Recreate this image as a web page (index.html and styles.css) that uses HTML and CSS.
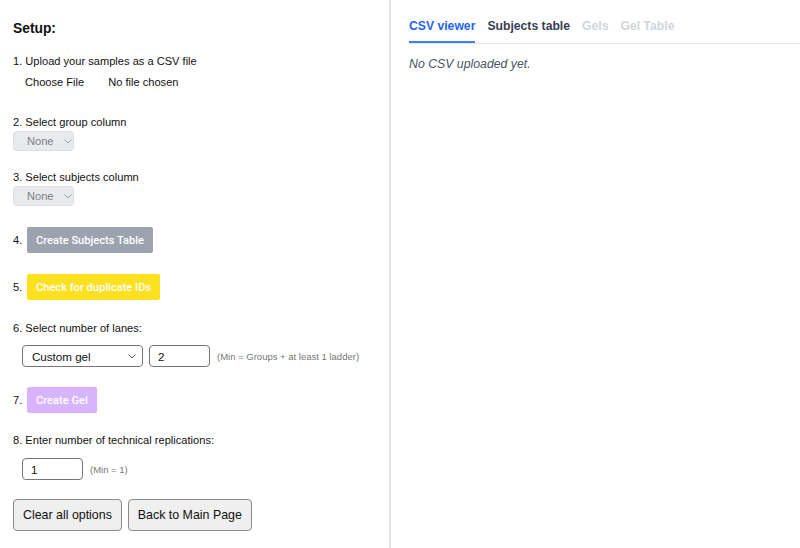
FILE: index.html
```html
<!DOCTYPE html>
<html>
<head>
<meta charset="utf-8">
<link rel="stylesheet" href="styles.css">
</head>
<body>
<div class="page">
  <div class="left">
    <h2 class="title">Setup:</h2>
    <div class="label s1">1. Upload your samples as a CSV file</div>
    <div class="file-row"><span class="file-btn">Choose File</span><span class="file-name">No file chosen</span></div>

    <div class="label s2">2. Select group column</div>
    <div class="sel-dis">None <svg class="chev" viewBox="0 0 8 5" width="8" height="5"><path d="M0.5 0.5 L4 4 L7.5 0.5" fill="none" stroke="#9ca3af" stroke-width="1"/></svg></div>

    <div class="label s3">3. Select subjects column</div>
    <div class="sel-dis">None <svg class="chev" viewBox="0 0 8 5" width="8" height="5"><path d="M0.5 0.5 L4 4 L7.5 0.5" fill="none" stroke="#9ca3af" stroke-width="1"/></svg></div>

    <div class="btn-row s4"><span class="num">4.</span><span class="btn gray">Create Subjects Table</span></div>
    <div class="btn-row s5"><span class="num">5.</span><span class="btn yellow">Check for duplicate IDs</span></div>

    <div class="label s6">6. Select number of lanes:</div>
    <div class="input-row r6">
      <div class="select">Custom gel <svg class="chev2" viewBox="0 0 8 5" width="8" height="5"><path d="M0.5 0.5 L4 4 L7.5 0.5" fill="none" stroke="#555" stroke-width="1"/></svg></div>
      <div class="input">2</div>
      <span class="hint">(Min = Groups + at least 1 ladder)</span>
    </div>

    <div class="btn-row s7"><span class="num">7.</span><span class="btn purple">Create Gel</span></div>

    <div class="label s8">8. Enter number of technical replications:</div>
    <div class="input-row r8">
      <div class="input">1</div>
      <span class="hint">(Min = 1)</span>
    </div>

    <div class="actions">
      <span class="action">Clear all options</span>
      <span class="action">Back to Main Page</span>
    </div>
  </div>
  <div class="right">
    <div class="tabs">
      <span class="tab active">CSV viewer</span>
      <span class="tab">Subjects table</span>
      <span class="tab disabled">Gels</span>
      <span class="tab disabled">Gel Table</span>
    </div>
    <div class="empty">No CSV uploaded yet.</div>
  </div>
</div>
</body>
</html>
```

FILE: styles.css
```css
* { box-sizing: border-box; }
html, body { margin: 0; padding: 0; background: #fff; }
body {
  font-family: "Liberation Sans", Arial, sans-serif;
  color: #111;
  width: 800px;
  height: 548px;
  overflow: hidden;
}
.page { display: flex; height: 548px; }
.left {
  width: 389px;
  padding: 18px 0 0 13px;
  display: flex;
  flex-direction: column;
  align-items: flex-start;
}
.right {
  flex: 1;
  border-left: 2px solid #e3e5e9;
  padding: 0 0 0 18px;
}
.title {
  margin: 0;
  font-size: 13.8px;
  font-weight: bold;
  line-height: 21px;
}
.label { font-size: 11.1px; line-height: 16px; }
.s1 { margin-top: 14px; }
.file-row {
  margin-top: 3px;
  height: 20px;
  display: flex;
  align-items: center;
  font-size: 11.1px;
  padding-left: 12px;
}
.file-btn { margin-right: 24px; }
.s2 { margin-top: 22px; }
.s3 { margin-top: 18px; }
.sel-dis {
  margin-top: 1px;
  width: 61px;
  height: 20px;
  background: #e9eaee;
  border: 1px solid #dcdee3;
  border-radius: 4px;
  color: #7b7f87;
  font-size: 11.1px;
  display: flex;
  align-items: center;
  padding-left: 13px;
}
.chev { margin-left: 10px; }
.btn-row { display: flex; align-items: center; font-size: 11.1px; }
.num { width: 14px; }
.btn {
  height: 26px;
  display: inline-flex;
  align-items: center;
  padding: 0 9px;
  color: #fff;
  font-family: Roboto, "Liberation Sans", sans-serif;
  font-size: 11.1px;
  font-weight: 500;
  border-radius: 2px;
}
.gray { background: #9ca3af; }
.yellow { background: #fde01f; }
.purple { background: #d8b4fe; }
.s4 { margin-top: 21px; }
.s5 { margin-top: 21px; }
.s6 { margin-top: 20px; }
.input-row {
  display: flex;
  align-items: center;
  padding-left: 9px;
  margin-top: 9px;
}
.select {
  width: 121px;
  height: 22px;
  border: 1px solid #767676;
  border-radius: 4px;
  font-size: 11.6px;
  display: flex;
  align-items: center;
  padding-left: 9px;
}
.chev2 { margin-left: auto; margin-right: 6px; }
.input {
  width: 61px;
  height: 22px;
  border: 1px solid #767676;
  border-radius: 4px;
  font-size: 11.6px;
  display: flex;
  align-items: center;
  padding-left: 8px;
  margin-left: 6px;
}
.r8 .input { margin-left: 0; }
.hint { font-size: 9.5px; color: #777; margin-left: 7px; }
.s7 { margin-top: 20px; }
.s8 { margin-top: 19px; }
.r8 { margin-top: 10px; }
.actions { display: flex; gap: 6px; margin-top: 19px; }
.action {
  height: 32px;
  display: inline-flex;
  align-items: center;
  padding: 0 9px;
  background: #efefef;
  border: 1px solid #8a8a8a;
  border-radius: 4px;
  font-size: 12.4px;
}
.tabs {
  display: flex;
  gap: 12px;
  height: 44px;
  border-bottom: 1px solid #e5e7eb;
  padding-top: 18px;
}
.tab {
  font-size: 12.2px;
  font-weight: bold;
  color: #374151;
  height: 25px;
  line-height: 17px;
}
.tab.active { color: #2563eb; border-bottom: 2px solid #3b82f6; }
.tab.disabled { color: #d1d5db; }
.empty {
  margin-top: 13px;
  font-size: 12.3px;
  font-style: italic;
  color: #4b5563;
}
```
